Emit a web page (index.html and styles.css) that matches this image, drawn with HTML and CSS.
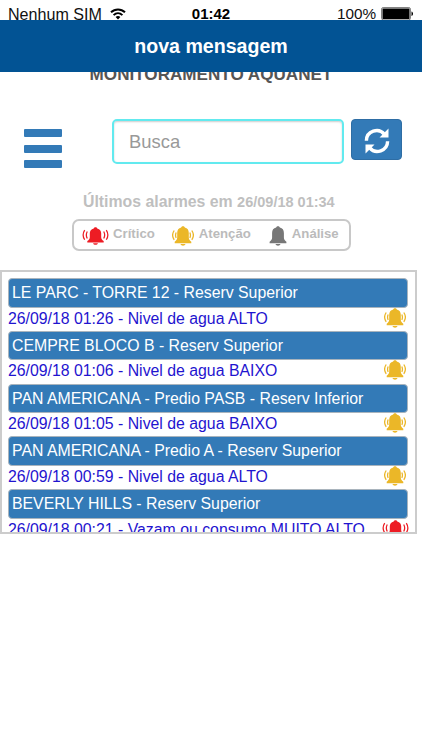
FILE: index.html
```html
<!DOCTYPE html>
<html lang="pt-br">
<head>
  <meta charset="UTF-8" />
  <meta name="viewport" content="width=device-width, initial-scale=1" />
  <title>Monitoramento Aquanet</title>
  <link rel="stylesheet" href="styles.css">
</head>
<body>
  <!-- icons -->
  <svg class="defs" width="0" height="0">
    <symbol id="bell" viewBox="0 0 18 20">
      <path d="M9 0.300c1.200 0 1.700 .6 1.800 1.300c2.800 .6 4.100 2.500 4.100 5.300v4.600c0 1.900 .8 3 2.500 4.300v1.400H.6v-1.400c1.700-1.300 2.500-2.400 2.500-4.300V6.900c0-2.800 1.300-4.700 4.100-5.300C7.300 .9 7.800 .3 9 .3z"/>
      <path d="M6.500 18h5c-.3 1-1.300 1.700-2.500 1.700s-2.200-.7-2.500-1.700z"/>
    </symbol>
    <symbol id="ring" viewBox="0 0 22 20">
      <path d="M11 .3c1.200 0 1.700 .6 1.800 1.300c2.700 .6 4 2.500 4 5.300v4.600c0 1.900 .8 3 2.500 4.300v1.400H2.700v-1.400c1.700-1.300 2.500-2.400 2.500-4.300V6.900c0-2.800 1.300-4.700 4-5.300C9.300 .9 9.800 .3 11 .3z"/>
      <path d="M8.500 18h5c-.3 1-1.300 1.700-2.500 1.700s-2.200-.7-2.500-1.700z"/>
      <path class="wave" d="M2.200 4.500C.2 7.400 .2 10.900 2.200 13.900M4.200 6.500c-.9 1.900-.9 3.500 0 5.400M19.800 4.500c2 2.900 2 6.400 0 9.400M17.800 6.500c.9 1.900 .9 3.500 0 5.400"/>
    </symbol>
    <symbol id="alarm" viewBox="0 0 28 20">
      <path d="M14 .8c1.200 0 1.700 .6 1.800 1.300c2.800 .6 4.100 2.400 4.100 5.100v3.900c0 1.900 .8 3 2.600 4.200v1.400h-17v-1.400c1.800-1.200 2.600-2.300 2.600-4.200V7.200c0-2.700 1.300-4.500 4.100-5.100C12.300 1.400 12.800 .8 14 .8z"/>
      <path d="M11.500 17.400h5c-.3 1-1.300 1.600-2.500 1.600s-2.200-.6-2.500-1.600z"/>
      <path class="wave" d="M2.800 4C.6 7.400 .6 10.600 2.800 13.900M5.500 5.300c-1.400 2.500-1.400 4.800 0 7.300M25.200 4c2.200 3.400 2.200 6.600 0 9.900M22.500 5.300c1.400 2.500 1.400 4.800 0 7.300"/>
    </symbol>
  </svg>

  <div class="status">
    <div class="carrier">
      Nenhum SIM
      <svg class="wifi" viewBox="0 0 16 12">
        <path d="M1 4.300C5 .4 11 .4 15 4.300M3.600 7.100c2.600-2.500 6.200-2.500 8.800 0"/>
        <path class="dot" d="M5.600 9c1.500-1.300 3.300-1.300 4.800 0L8 11.600z"/>
      </svg>
    </div>
    <div class="clock">01:42</div>
    <div class="power">
      100%
      <svg class="battery" viewBox="0 0 33 14">
        <rect class="shell" x=".6" y=".6" width="28.800" height="12.300" rx="1.500"/>
        <rect x="1.500" y="1.500" width="27" height="10.500" rx=".5"/>
        <path d="M30.500 4.500c2 .7 2 3.800 0 4.500z"/>
      </svg>
    </div>
  </div>

  <header>nova mensagem</header>

  <main>
    <h1>MONITORAMENTO AQUANET</h1>

    <div class="toolbar">
      <button class="menu" aria-label="Menu"><span></span><span></span><span></span></button>
      <input type="text" placeholder="Busca" />
      <button class="refresh" aria-label="Atualizar">
        <svg viewBox="0 0 26 26">
          <path class="arc" d="M2.400 12.700A10.200 10.200 0 0 1 20.500 6.400M23.600 13.300A10.200 10.200 0 0 1 5.500 19.600"/>
          <path d="M24.500 .5v9h-9zM1.500 25.500v-9h9z"/>
        </svg>
      </button>
    </div>

    <div class="updated">Últimos alarmes em <small>26/09/18 01:34</small></div>

    <div class="legend">
      <span class="critical"><svg class="icon wide"><use href="#alarm"/></svg>Crítico</span>
      <span class="attention"><svg class="icon"><use href="#ring"/></svg>Atenção</span>
      <span class="analysis"><svg class="icon narrow"><use href="#bell"/></svg>Análise</span>
    </div>

    <div class="alarms">
      <div class="place">LE PARC - TORRE 12 - Reserv Superior</div>
      <div class="event">26/09/18 01:26 - Nivel de agua ALTO <svg class="icon yellow"><use href="#ring"/></svg></div>
      <div class="place">CEMPRE BLOCO B - Reserv Superior</div>
      <div class="event">26/09/18 01:06 - Nivel de agua BAIXO <svg class="icon yellow"><use href="#ring"/></svg></div>
      <div class="place">PAN AMERICANA - Predio PASB - Reserv Inferior</div>
      <div class="event">26/09/18 01:05 - Nivel de agua BAIXO <svg class="icon yellow"><use href="#ring"/></svg></div>
      <div class="place">PAN AMERICANA - Predio A - Reserv Superior</div>
      <div class="event">26/09/18 00:59 - Nivel de agua ALTO <svg class="icon yellow"><use href="#ring"/></svg></div>
      <div class="place">BEVERLY HILLS - Reserv Superior</div>
      <div class="event">26/09/18 00:21 - Vazam ou consumo MUITO ALTO <svg class="icon wide red"><use href="#alarm"/></svg></div>
    </div>
  </main>
</body>
</html>
```

FILE: styles.css
```css
* {
  box-sizing: border-box;
}
body {
  margin: 0;
  height: 750px;
  overflow: hidden;
  background: #fff;
  font-family: "Liberation Sans", Arial, sans-serif;
}
.defs {
  display: block;
}

/* Status bar */
.status {
  height: 20px;
  padding: 4px 8px 0 8px;
  display: grid;
  grid-template-columns: 1fr auto 1fr;
  line-height: 20px;
  font-size: 15.3px;
  color: #111;
}
.carrier {
  font-size: 16.1px;
}
.clock {
  font-size: 15px;
  font-weight: bold;
  color: #000;
}
.power {
  display: flex;
  justify-content: flex-end;
  gap: 5px;
}
.wifi {
  width: 16px;
  height: 12px;
  margin-left: 4px;
  fill: none;
  stroke: #000;
  stroke-width: 2;
}
.wifi .dot {
  fill: #000;
  stroke: none;
}
.battery {
  width: 33px;
  height: 14px;
  margin-top: 3px;
}
.battery .shell {
  fill: none;
  stroke: #777;
  stroke-width: 1;
}

/* header sits over the page title */
header {
  position: relative;
  z-index: 1;
  height: 52px;
  background: #025394;
  color: #fff;
  text-align: center;
  font-size: 19.6px;
  font-weight: bold;
  line-height: 52px;
}
main {
  display: flow-root;
}
h1 {
  margin: -9px 0 0;
  font-size: 17.1px;
  line-height: 24px;
  text-align: center;
  color: #555;
}

/* Search row */
.toolbar {
  display: flex;
  align-items: flex-start;
  padding: 32px 20px 0 24px;
}
button {
  border: 0;
  padding: 0;
}
.menu {
  width: 38px;
  margin: 10px 50px 0 0;
  background: none;
  display: flex;
  flex-direction: column;
  gap: 7.5px;
}
.menu span {
  height: 8px;
  width: 100%;
  border-radius: 1px;
  background: #337ab7;
}
input {
  width: 232px;
  height: 45px;
  padding: 0 15px;
  border: 2px solid #62eaef;
  border-radius: 5px;
  box-shadow: inset 0 1px 2px #ccc;
  font-family: inherit;
  font-size: 18.4px;
}
input::placeholder {
  color: #999;
}
.refresh {
  width: 51px;
  height: 41px;
  margin-left: 7px;
  border: 1px solid #2e6da4;
  border-radius: 4px;
  background: #337ab7;
  display: flex;
  justify-content: center;
  align-items: center;
}
.refresh svg {
  width: 26px;
  height: 26px;
  margin-top: 2px;
  fill: #fff;
}
.refresh .arc {
  fill: none;
  stroke: #fff;
  stroke-width: 3.400;
}

.updated {
  margin: 24px 0 0 83px;
  line-height: 20px;
  font-size: 15.85px;
  font-weight: bold;
  color: #bfbfbf;
}
.updated small {
  font-size: 14.5px;
}

/* Legend */
.legend {
  width: 279px;
  height: 32px;
  margin: 7px 0 0 72px;
  padding-left: 8px;
  border: 2px solid #c8c8c8;
  border-radius: 7px;
  display: flex;
  font-size: 13.2px;
  font-weight: bold;
  line-height: 25px;
  color: #bbb;
}
.legend .icon {
  margin: 5px 5px 0 0;
}
.legend span {
  display: flex;
}
.legend .icon.wide {
  margin-right: 4px;
}
.attention {
  margin-left: 17px;
}
.analysis {
  margin-left: 18px;
}
.icon {
  width: 22px;
  height: 20px;
  flex: none;
}
.icon.wide {
  width: 27px;
}
.icon.narrow {
  width: 18px;
}
.wave {
  fill: none;
  stroke: currentColor;
  stroke-width: 1.300;
}
.critical .icon,
.red {
  color: #ed1c24;
  fill: #ed1c24;
}
.attention .icon,
.yellow {
  color: #ebb728;
  fill: #ebb728;
}
.analysis .icon {
  fill: #777;
}

/* Alarm list */
.alarms {
  width: 417px;
  height: 264px;
  margin-top: 19px;
  padding: 6px 7px 0 6px;
  border: 2px solid #ccc;
  overflow: hidden;
  font-size: 15.83px;
}
.place {
  height: 29.500px;
  padding-left: 3px;
  border: 1px solid #a9b4bd;
  border-radius: 4px;
  background: #337ab7;
  color: #fff;
  line-height: 27px;
}
.event {
  height: 23.250px;
  display: flex;
  justify-content: space-between;
  line-height: 22px;
  color: #1f14cf;
}
.event .icon {
  margin-right: 2px;
}
.event .icon.wide {
  margin: 0 -1px 0 0;
}
```
